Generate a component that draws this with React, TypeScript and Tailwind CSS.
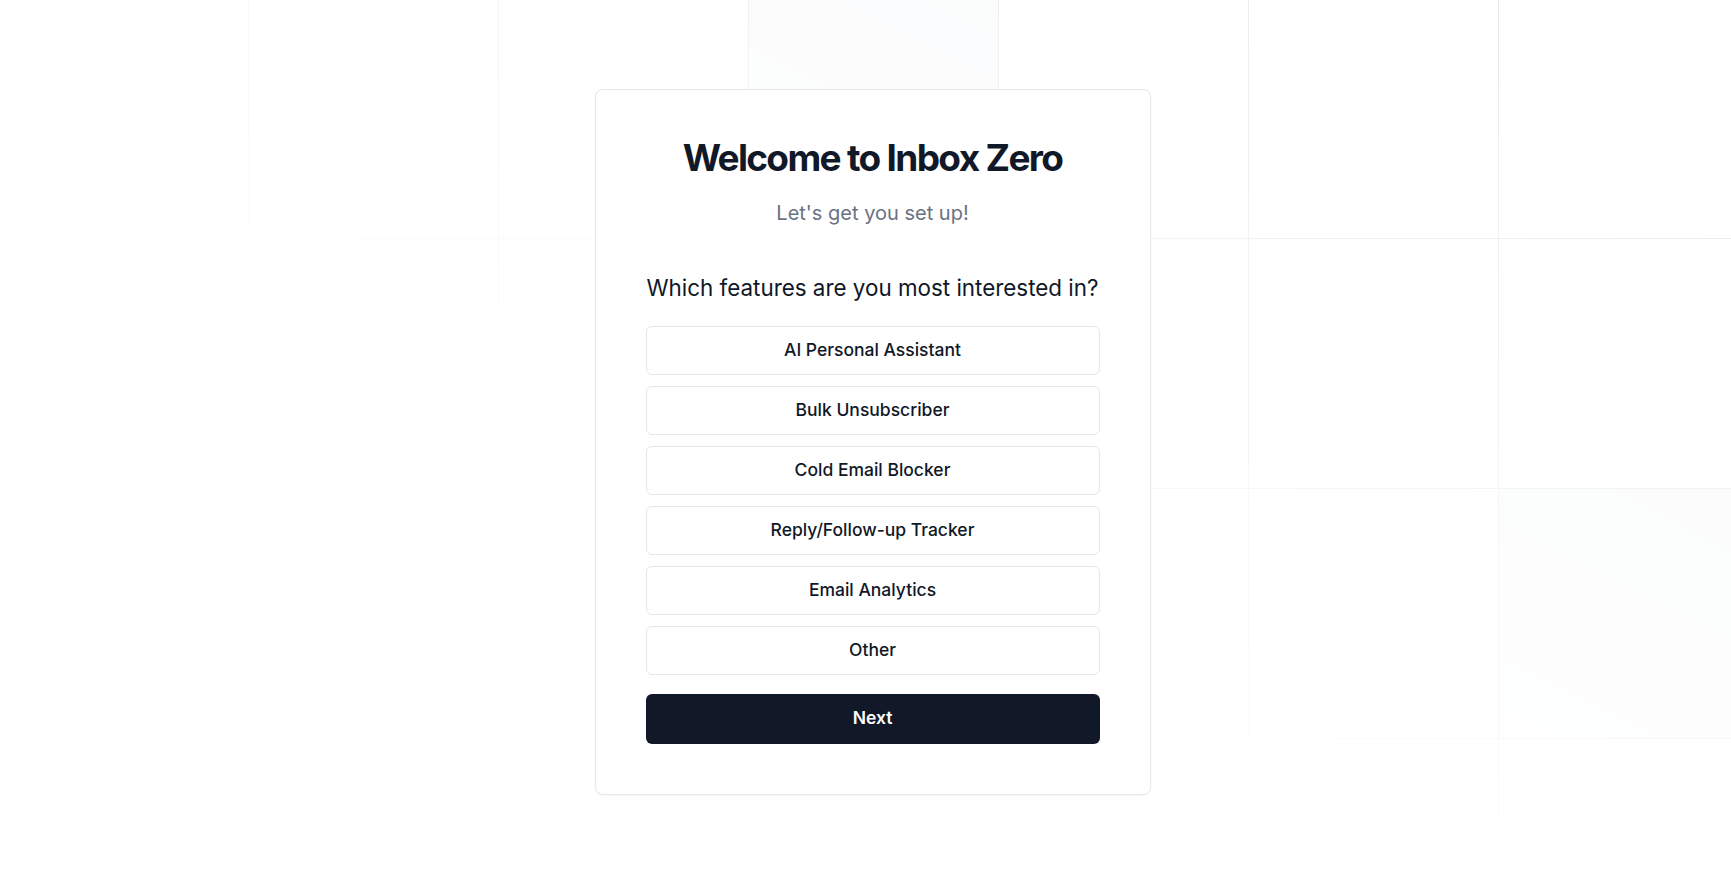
import React, { useState } from 'react';

const features = [
  'AI Personal Assistant',
  'Bulk Unsubscriber',
  'Cold Email Blocker',
  'Reply/Follow-up Tracker',
  'Email Analytics',
  'Other',
];

const GridBackground = () => (
  <svg
    className="absolute inset-0 h-full w-full stroke-gray-200 [mask-image:linear-gradient(to_bottom_left,white,transparent_62%)]"
    aria-hidden="true"
  >
    <defs>
      <pattern id="onboarding-grid" width={250} height={250} x={-2} y={-12} patternUnits="userSpaceOnUse">
        <path d="M.5 250V.5H250" fill="none" />
      </pattern>
    </defs>
    <path className="fill-gray-50" strokeWidth={0} d="M748 0h250v238h-250Z M1498 488h250v250h-250Z" />
    <rect width="100%" height="100%" strokeWidth={0} fill="url(#onboarding-grid)" />
  </svg>
);

export default function App() {
  const [selected, setSelected] = useState<string[]>([]);

  const toggle = (f: string) =>
    setSelected((s) => (s.includes(f) ? s.filter((x) => x !== f) : [...s, f]));

  return (
    <div className="relative min-h-screen overflow-hidden bg-white font-['Inter','Noto_Sans',sans-serif] text-gray-900">
      <GridBackground />

      <div className="relative flex min-h-screen items-center justify-center pb-[7px] pl-[14px]">
        <div className="w-[556px] rounded-lg border border-gray-200 bg-white px-[50px] pt-[46px] pb-[50px] shadow-[0_1px_2px_rgba(0,0,0,0.03)]">
          <h1 className="text-center text-[37px] font-bold leading-[44px] tracking-[-0.045em] text-[#111827]">
            Welcome to Inbox Zero
          </h1>
          <p className="mt-[19px] text-center text-xl leading-7 text-gray-500">Let's get you set up!</p>

          <h2 className="-mx-4 mt-[45px] whitespace-nowrap text-center text-[22.4px] leading-8 text-gray-900">
            Which features are you most interested in?
          </h2>

          <div className="mt-[22px] flex flex-col gap-[11px]">
            {features.map((f) => (
              <button
                key={f}
                onClick={() => toggle(f)}
                className={`h-[49px] w-full rounded-md border text-[17.5px] font-medium text-gray-900 ${
                  selected.includes(f) ? 'border-gray-900 bg-gray-50' : 'border-gray-200 bg-white'
                }`}
              >
                {f}
              </button>
            ))}
          </div>

          <button className="mt-[19px] h-[50px] w-full rounded-md bg-[#111827] text-[17.5px] font-semibold text-white">
            Next
          </button>
        </div>
      </div>
    </div>
  );
}
